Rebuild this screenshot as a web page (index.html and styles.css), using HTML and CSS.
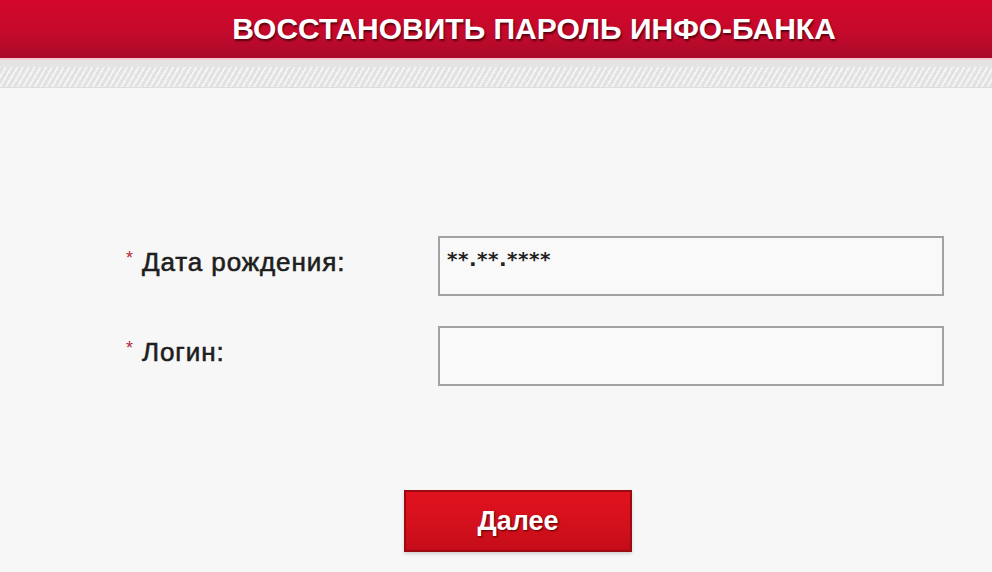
FILE: index.html
```html
<!DOCTYPE html>
<html lang="ru">
<head>
  <meta charset="UTF-8">
  <meta name="viewport" content="width=device-width, initial-scale=1.0">
  <title>Восстановить пароль Инфо-Банка</title>
  <link rel="stylesheet" href="styles.css">
</head>
<body>

  <!-- Header -->
  <div class="header">
    <h1>ВОССТАНОВИТЬ ПАРОЛЬ ИНФО-БАНКА</h1>
  </div>
  <div class="stripe"></div>

  <!-- Form -->
  <form class="form-container">
    <div class="row">
      <label for="birthDate"><span class="req">*</span> Дата рождения:</label>
      <div class="field"><input type="text" id="birthDate" value="**.**.****"></div>
    </div>
    <div class="row">
      <label for="login"><span class="req">*</span> Логин:</label>
      <div class="field"><input type="text" id="login"></div>
    </div>
    <div class="actions">
      <button type="submit">Далее</button>
    </div>
  </form>

</body>
</html>
```

FILE: styles.css
```css
/* General Styling */
body {
  font-family: "Liberation Sans", Arial, sans-serif;
  background-color: #f7f7f7;
  margin: 0;
  padding: 0;
  width: 992px;
  height: 572px;
  overflow: hidden;
}

/* Header */
.header {
  height: 58px;
  background: linear-gradient(#d4062a, #c30a2c 60%, #a80a28);
  border-bottom: 2px solid #f6c9d2;
  display: flex;
  justify-content: center;
  align-items: center;
  padding-left: 76px;
}

.header h1 {
  margin: 0;
  color: #fff;
  font-size: 30px;
  font-weight: bold;
  white-space: nowrap;
  text-shadow: 1px 2px 2px rgba(60, 0, 10, 0.8);
}

.stripe {
  height: 27px;
  background-color: #e4e4e4;
  background-image: repeating-linear-gradient(-60deg, #e2e2e2 0, #e2e2e2 3px, #f4f4f4 3px, #f4f4f4 5px);
  background-size: 100% 20px;
  background-position: 0 7px;
  background-repeat: no-repeat;
  border-bottom: 1px solid #dedede;
}

/* Form */
.form-container {
  padding: 148px 0 0 0;
}

.row {
  display: flex;
  align-items: center;
  margin-bottom: 30px;
}

label {
  flex: 0 0 438px;
  padding: 0 0 8px 126px;
  font-size: 26px;
  letter-spacing: 0.9px;
  color: #1e1e1e;
  -webkit-text-stroke: 0.6px #1e1e1e;
  white-space: nowrap;
  box-sizing: border-box;
}

.req {
  color: #b4293c;
  font-size: 18px;
  vertical-align: 7px;
  -webkit-text-stroke: 0;
}

.field {
  width: 506px;
}

input[type="text"] {
  width: 100%;
  height: 60px;
  padding: 0 7px 14px;
  border: 2px solid #a2a2a2;
  background: #f9f9f9;
  box-sizing: border-box;
  font-family: "DejaVu Sans", sans-serif;
  font-size: 20px;
  letter-spacing: 0.5px;
  font-weight: bold;
  color: #222;
  outline: none;
}

.actions {
  padding: 74px 0 0 404px;
}

button {
  width: 228px;
  height: 62px;
  background: linear-gradient(#e0121e, #d2101c 60%, #c40c18);
  border: 2px solid #9c0a12;
  color: #fff;
  font-family: "Liberation Sans", Arial, sans-serif;
  font-size: 27px;
  font-weight: bold;
  text-shadow: 1px 1px 2px rgba(70, 0, 0, 0.9);
  cursor: pointer;
  box-shadow: 0 2px 3px rgba(0, 0, 0, 0.15);
}
```
